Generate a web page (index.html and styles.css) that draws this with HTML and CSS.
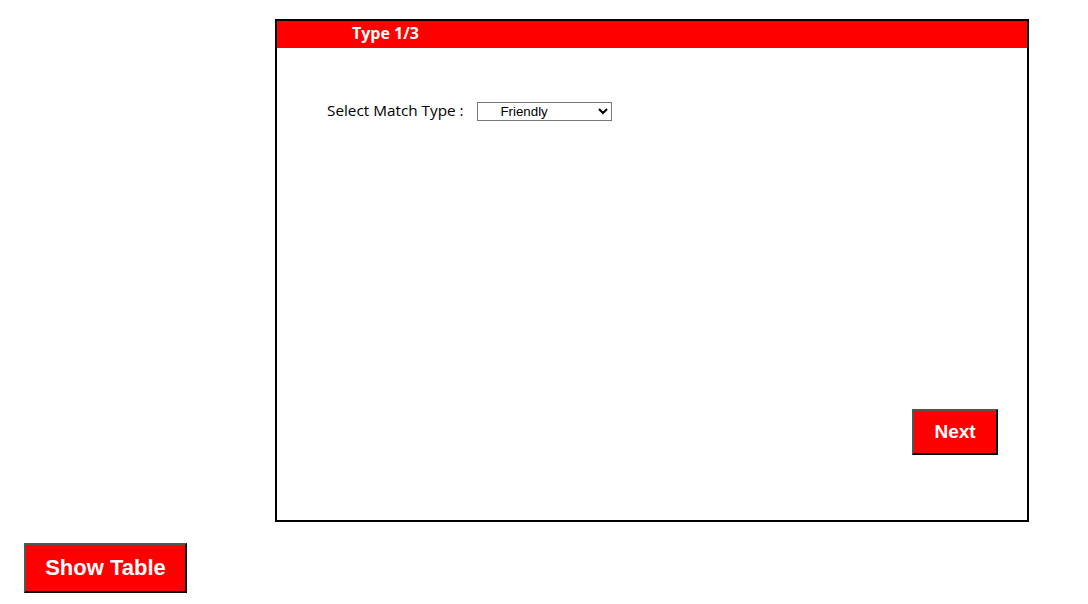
FILE: index.html
```html
<!DOCTYPE html>
<html>
<head>
<meta charset="utf-8">
<link rel="stylesheet" href="styles.css">
</head>
<body>
<div class="panel">
  <div class="panel-head">Type 1/3</div>
  <div class="panel-body">
    <div class="form-row">
      <label class="label" for="mt">Select Match Type :</label>
      <select id="mt" class="select">
        <option>Friendly</option>
      </select>
    </div>
    <div class="actions">
      <button class="btn btn-next">Next</button>
    </div>
  </div>
</div>
<div class="footer">
  <button class="btn btn-table">Show Table</button>
</div>
</body>
</html>
```
FILE: styles.css
```css
html, body {
  margin: 0;
  padding: 0;
  background: #fff;
}
body {
  font-family: "Open Sans", "Noto Sans", sans-serif;
}
.panel {
  margin: 19px 0 0 275px;
  width: 754px;
  height: 503px;
  box-sizing: border-box;
  border: 2px solid #000;
  display: flex;
  flex-direction: column;
}
.panel-head {
  background: #ff0000;
  color: #fff;
  font-weight: bold;
  font-size: 16px;
  height: 27px;
  line-height: 25px;
  padding-left: 75px;
}
.panel-body {
  flex: 1;
  display: flex;
  flex-direction: column;
  justify-content: space-between;
  padding: 53px 29px 65px 50px;
}
.form-row {
  display: flex;
  align-items: flex-start;
  gap: 13px;
}
.label {
  font-size: 15.3px;
  line-height: 18px;
  color: #000;
}
.select {
  width: 135px;
  height: 19px;
  font-family: "Liberation Sans", Arial, sans-serif;
  font-size: 13.3px;
  text-align: center;
  text-align-last: center;
  border: 1px solid #767676;
  border-radius: 0;
  background: #fff;
  color: #000;
  padding: 0 28px 0 0;
  margin-top: 1px;
}
.actions {
  display: flex;
  justify-content: flex-end;
}
.btn {
  background: #ff0000;
  color: #fff;
  font-family: "Liberation Sans", Arial, sans-serif;
  font-weight: bold;
  border: 2px outset #555;
  border-color: #555 #000 #000 #555;
  cursor: pointer;
  padding: 0;
}
.btn-next {
  width: 86px;
  height: 46px;
  font-size: 19px;
}
.footer {
  padding: 21px 0 0 24px;
}
.btn-table {
  width: 163px;
  height: 50px;
  font-size: 22px;
}
```
